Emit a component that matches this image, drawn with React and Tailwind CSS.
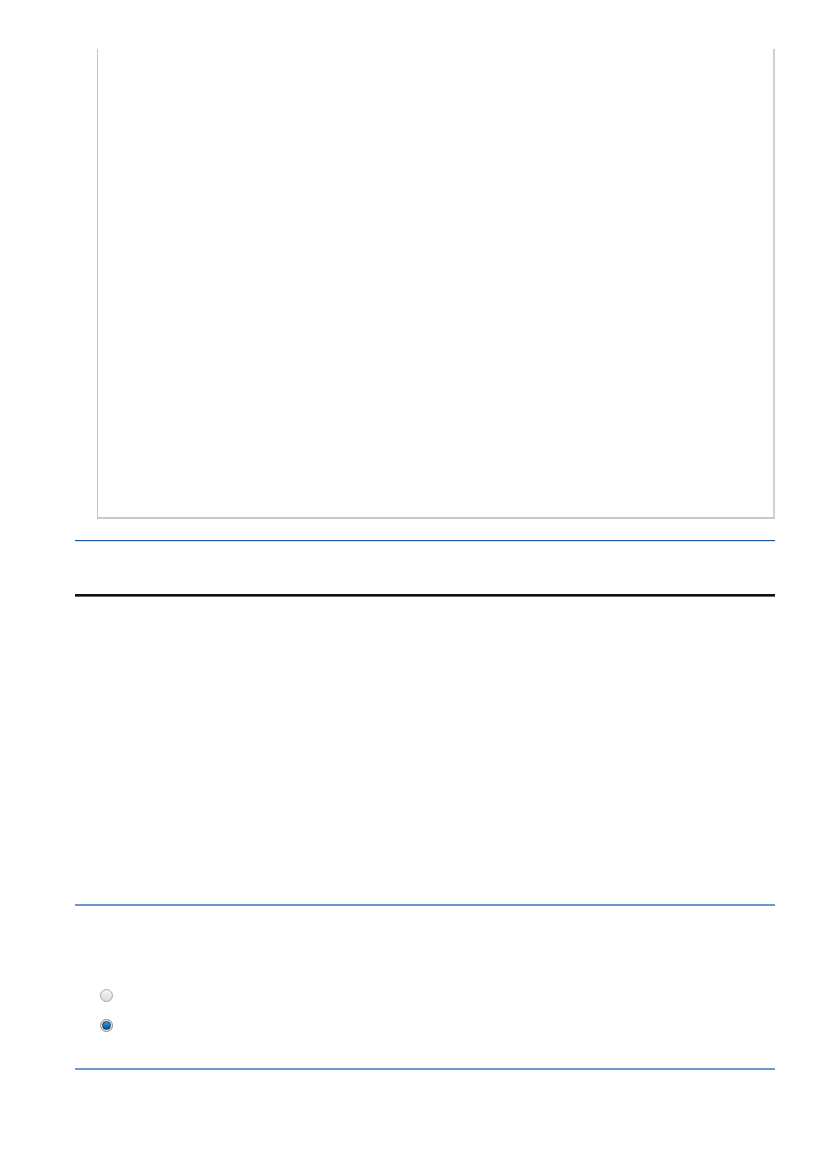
// Settings form fragment: preview frame, section rules and a radio group
function Radio({ checked }) {
  return (
    <span
      className={`inline-block w-[13px] h-[13px] rounded-full border ${
        checked
          ? 'border-[#8a8a8a] bg-[#e8e8e8] p-[1px]'
          : 'border-[#a8a8a8] bg-gradient-to-b from-[#f4f4f4] to-[#dcdcdc]'
      }`}
    >
      {checked && (
        <span className="block w-full h-full rounded-full bg-gradient-to-b from-[#3a9ae0] to-[#0b4f8a] border border-[#0b3d6b]" />
      )}
    </span>
  );
}

export default function App() {
  return (
    <div className="min-h-[1169px] w-[827px] bg-white" style={{ fontFamily: '"Liberation Sans", Arial, sans-serif' }}>
      <div className="w-[700px] ml-[75px] pt-[49px]">
        {/* Preview frame */}
        <div className="ml-[22px] w-[678px] h-[470px] border-l border-r-2 border-b-2 border-l-[#c4c4c4] border-r-[#d0d0d0] border-b-[#c8c8c8]" />

        {/* Section rule */}
        <div className="mt-[21px] h-[2px] border-t border-[#1d56a0] bg-[#dbe6f3]" />

        {/* Heading underline */}
        <div className="mt-[52px] h-[3px] bg-[#111] border-b border-[#666]" />

        {/* Section rule */}
        <div className="mt-[307px] h-[2px] bg-[#6c98cc]" />

        {/* Radio group */}
        <div className="mt-[83px] ml-[25px] flex flex-col gap-[17px]">
          <Radio />
          <Radio checked />
        </div>

        {/* Section rule */}
        <div className="mt-[36px] h-[2px] bg-[#6c98cc]" />
      </div>
    </div>
  );
}
